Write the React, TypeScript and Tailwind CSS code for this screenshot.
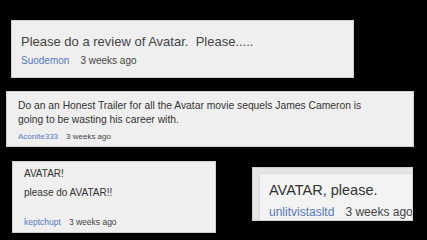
import React from "react";

const font = { fontFamily: '"Liberation Sans", Arial, sans-serif' };

function Meta({ user, size, gap }: { user: string; size: string; gap: string }) {
  return (
    <div className={`flex whitespace-nowrap ${gap} ${size} leading-none`}>
      <span className="text-[#5577c4]">{user}</span>
      <span className="text-[#444]">3 weeks ago</span>
    </div>
  );
}

export default function App() {
  return (
    <div className="w-[427px] h-[240px] bg-black overflow-hidden flex flex-col" style={font}>
      <div className="ml-[11px] mt-[20px] w-[343px] h-[58px] bg-[#efefef] border border-[#cfcfcf] pl-[9px] pt-[14px]">
        <p className="text-[13px] leading-none text-[#444] whitespace-pre">
          {"Please do a review of Avatar.  Please....."}
        </p>
        <div className="mt-[8px]">
          <Meta user="Suodemon" size="text-[10px]" gap="gap-[11px]" />
        </div>
      </div>

      <div className="ml-[6px] mt-[13px] w-[408px] h-[56px] bg-[#efefef] border border-[#cfcfcf] pl-[11px] pt-[7px]">
        <p className="text-[10.3px] leading-[14px] text-[#333] w-[360px]">
          Do an an Honest Trailer for all the Avatar movie sequels James Cameron is going to be wasting his career with.
        </p>
        <div className="mt-[6px]">
          <Meta user="Aconite333" size="text-[8px]" gap="gap-[8px]" />
        </div>
      </div>

      <div className="flex items-start">
        <div className="ml-[12px] mt-[14px] w-[204px] h-[72px] bg-[#efefef] border border-[#cfcfcf] pl-[11px] pt-[7px] flex flex-col">
          <p className="text-[10px] leading-none text-[#333]">AVATAR!</p>
          <p className="text-[10px] leading-none text-[#333] mt-[9px]">please do AVATAR!!</p>
          <div className="mt-auto mb-[6px]">
            <Meta user="keptchupt" size="text-[8.5px]" gap="gap-[8px]" />
          </div>
        </div>

        <div className="ml-[36px] mt-[20px] w-[161px] h-[54px] bg-[#e4e4e4] border border-[#d0d0d0] pl-[6px] pt-[5px] overflow-hidden">
          <div className="h-full bg-[#f3f3f3] border-t border-l border-[#dcdcdc] pl-[9px] pt-[9px]">
            <p className="text-[14.5px] leading-none text-[#333] whitespace-nowrap">AVATAR, please.</p>
            <div className="mt-[8px]">
              <Meta user="unlitvistasltd" size="text-[12px]" gap="gap-[11px]" />
            </div>
          </div>
        </div>
      </div>
    </div>
  );
}
